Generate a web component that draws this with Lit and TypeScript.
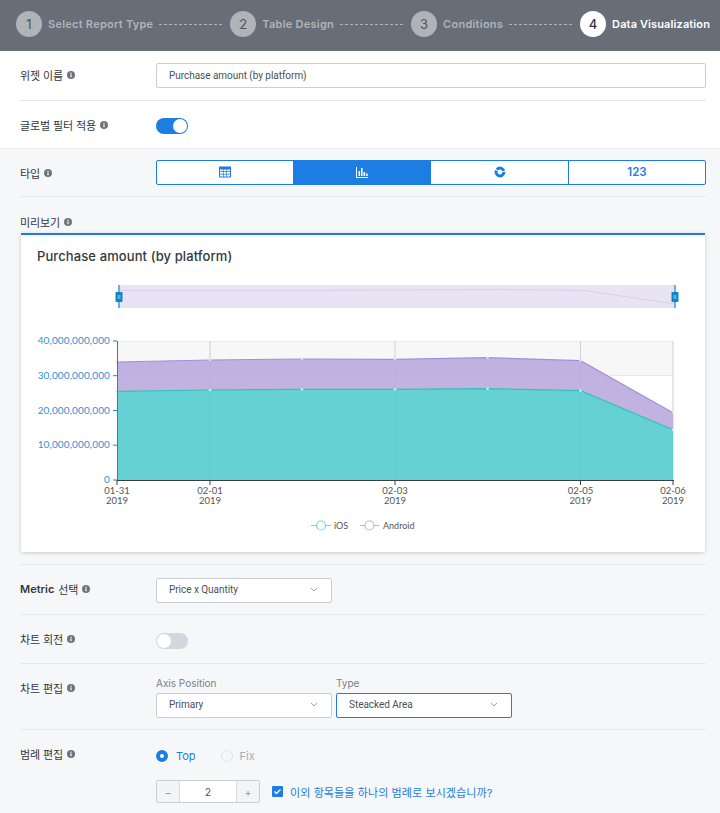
import { LitElement, html, css, svg } from "lit";
import { customElement } from "lit/decorators.js";

const XS = [117, 210, 302, 395, 487.6, 580.5, 673];
const ANDROID = [362, 360, 359, 359.3, 357.7, 360.7, 412.7];
const IOS = [391.3, 390, 389.3, 389.3, 388.7, 390.7, 429.7];
const pts = (ys: number[]) => ys.map((y, i) => `${XS[i]},${y}`).join(" ");
const back = (ys: number[]) => ys.map((y, i) => `${XS[i]},${y}`).reverse().join(" ");

const info = html`<svg class="info" viewBox="0 0 8 8"><circle cx="4" cy="4" r="4" fill="#6d747c"/><rect x="3.4" y="3.4" width="1.2" height="2.8" fill="#fff"/><rect x="3.4" y="1.7" width="1.2" height="1.1" fill="#fff"/></svg>`;
const chevron = html`<svg class="chev" viewBox="0 0 8 5"><path d="M1 1l3 3 3-3" fill="none" stroke="#9aa1a9" stroke-width="1"/></svg>`;

function chart() {
  const yl = [["40,000,000,000", 341], ["30,000,000,000", 375.7], ["20,000,000,000", 410.5], ["10,000,000,000", 445.2], ["0", 480]] as [string, number][];
  const xl = [["01-31", 117], ["02-01", 210], ["02-03", 395], ["02-05", 580.5], ["02-06", 673]] as [string, number][];
  return html`<svg class="chart" viewBox="21 270 684 270" width="684" height="270">
    ${svg`
    <rect x="118" y="285" width="557" height="23" fill="#e8e4f4"/>
    <polyline points="118,290.5 300,290.5 500,289.5 584,290.5 675,304" fill="none" stroke="#d8d2e6" stroke-width="1"/>
    <path d="M119 285V308M675 285V308" stroke="#62b2e2" stroke-width="2"/>
    <rect x="115.5" y="292" width="7" height="10" rx="1" fill="#0f86c8"/>
    <rect x="671.500" y="292" width="7" height="10" rx="1" fill="#0f86c8"/>
    <path d="M117.5 296h3M117.5 298h3M673.5 296h3M673.5 298h3" stroke="#cfe8f6" stroke-width=".8"/>
    <rect x="117" y="341" width="556" height="34.7" fill="#f7f7f7"/>
    <path d="M117 341.5H673M117 375.500H673" stroke="#ebebeb"/>
    ${XS.filter((_, i) => i !== 2 && i !== 4).slice(1).map((x) => svg`<path d="M${x} 341V480" stroke="#d0d0d0"/>`)}
    <polygon points="${pts(ANDROID)} ${back(IOS)}" fill="#b7a4dc" fill-opacity=".85"/>
    <polygon points="${pts(IOS)} 673,480 117,480" fill="#4fcacc" fill-opacity=".87"/>
    <polyline points="${pts(ANDROID)}" fill="none" stroke="#a48fda" stroke-width="1.2"/>
    <polyline points="${pts(IOS)}" fill="none" stroke="#2fc0c2" stroke-width="1.2"/>
    ${XS.map((x, i) => svg`<circle cx="${x}" cy="${ANDROID[i]}" r="1.3" fill="#e4dcf5"/><circle cx="${x}" cy="${IOS[i]}" r="1.3" fill="#c6f1f1"/>`)}
    <path d="M117.5 341V480" stroke="#1b87c9" stroke-width="1"/>
    <path d="M117 480.5H674" stroke="#3d3d3d" stroke-width="1"/>
    ${yl.map(([t, y]) => svg`<path d="M113 ${y}H117" stroke="#1b87c9"/><text class="yl" x="110" y="${y + 3}" text-anchor="end">${t}</text>`)}
    ${xl.map(([t, x]) => svg`<path d="M${x} 480V485" stroke="#3d3d3d"/><text class="xl" x="${x}" y="493.5" text-anchor="middle">${t}</text><text class="xl" x="${x}" y="503.5" text-anchor="middle">2019</text>`)}
    <path d="M311 525.5H331" stroke="#6adcdc"/><circle cx="321" cy="525.5" r="4.5" fill="#fff" stroke="#6adcdc" stroke-width="1.2"/>
    <text class="lg" x="334" y="528.5">iOS</text>
    <path d="M360 525.5H379" stroke="#c3b2e8"/><circle cx="369.5" cy="525.5" r="4.5" fill="#fff" stroke="#c3b2e8" stroke-width="1.2"/>
    <text class="lg" x="383" y="528.5">Android</text>
    `}
  </svg>`;
}

@customElement("app-root")
export class AppRoot extends LitElement {
  static styles = css`
    :host { display: block; width: 720px; height: 813px; overflow: hidden; background: #f6f7f9; color: #33383e;
      font-family: Inter, "Noto Sans CJK KR", sans-serif; font-size: 10px; }
    * { box-sizing: border-box; }
    .steps { height: 51px; background: #676e78; display: flex; align-items: center; padding: 0 10px 3px 16px; }
    .step { display: flex; align-items: center; gap: 6px; color: #b0b4ba; font-size: 11px; font-weight: 600; letter-spacing: .25px; white-space: nowrap; }
    .num { width: 26px; height: 26px; border-radius: 50%; background: #b0b3b8; color: #4f555d; font-size: 13px; font-weight: 400;
      display: flex; align-items: center; justify-content: center; letter-spacing: 0; }
    .step.on { color: #fff; letter-spacing: .12px; }
    .step.on .num { background: #fff; color: #33383e; font-weight: 500; }
    .dash { flex: 1; height: 1px; margin: 0 6px; background: repeating-linear-gradient(90deg, #aeb2b8 0 3px, transparent 3px 5px); }
    .white { background: #fff; border-bottom: 1px solid #ececee; }
    .row { margin: 0 14px 0 20px; display: flex; border-bottom: 1px solid #e4e6e9; }
    .row.last { border-bottom: 0; }
    .label { width: 136px; flex: none; display: flex; align-items: center; gap: 4px; font-size: 11px; letter-spacing: -0.1px; color: #33383e; height: 16px; white-space: nowrap; }
    .label b { font-weight: 600; letter-spacing: 0; }
    .info { width: 8px; height: 8px; flex: none; }
    .r1 { padding: 12px 0 12px; } .r1 .label { margin-top: 4px; }
    .r2 { padding: 17px 0 14px; }
    .r2 .label { margin-top: -1px; }
    .input, .select { background: #fff; border: 1px solid #c9ced6; border-radius: 2px; height: 25px; display: flex; align-items: center; padding: 0 12px; color: #4a5058; }
    .mini { font-family: Roboto, "Noto Sans CJK KR", sans-serif; font-size: 10px; letter-spacing: -.04px; }
    .input { flex: 1; }
    .select { width: 176px; justify-content: space-between; position: relative; padding: 0 13px 3px 12px; }
    .select.focus { border-color: #1c7de2; }
    .chev { width: 8px; height: 5px; }
    .toggle { width: 32px; height: 16px; border-radius: 8px; background: #1c7de2; display: flex; justify-content: flex-end; padding: 1px; }
    .toggle i { width: 14px; height: 14px; border-radius: 50%; background: #fff; }
    .toggle.off { background: #d2d6df; justify-content: flex-start; }
    .r3 { padding: 11px 0; } .r3 .label { margin-top: 5px; }
    .seg { flex: 1; display: grid; grid-template-columns: 136px 138px 137px 137px; height: 25px; border: 1px solid #1c7de2; border-radius: 2px; background: #fff; overflow: hidden; }
    .seg div { display: flex; align-items: center; justify-content: center; color: #1c7de2; font-weight: 600; font-size: 11.5px; padding-bottom: 2px; }
    .seg div.sep { border-left: 1px solid #1c7de2; }
    .seg div.on { background: #1c7de2; color: #fff; }
    .seg svg { width: 12px; height: 12px; }
    .preview { margin: 0 14px 0 20px; padding: 16.5px 0 12px; border-bottom: 1px solid #e4e6e9; }
    .preview .label { margin-bottom: 3.5px; }
    .card { margin: 0 1px; height: 319px; background: #fff; border-top: 2px solid #1c7de2; border-radius: 0 0 2px 2px; box-shadow: 0 1px 4px rgba(0,0,0,.18); }
    .card h3 { margin: 0; padding: 12px 0 0 16px; height: 35px; font-size: 13px; font-weight: 500; color: #33383e; letter-spacing: .1px; line-height: 18px; }
    .chart { display: block; }
    .yl { font: 10px Lato, sans-serif; fill: #2f93d3; letter-spacing: .12px; }
    .xl { font: 9.5px Lato, sans-serif; fill: #555; }
    .lg { font: 9px Lato, sans-serif; fill: #555; }
    .r4 { padding: 13px 0 11px; } .r4 .label { margin-top: 3px; }
    .r5 { padding: 18px 0 14px; } .r5 .label { margin-top: -2px; }
    .r6 { padding: 14px 0 11px; } .r6 .label { margin-top: 2px; }
    .pair { display: flex; gap: 4px; }
    .field span { display: block; color: #7a8088; height: 15px; line-height: 11px; }
    .r7 { padding: 15px 0 0; } .r7 .label { margin-top: 1px; }
    .legend { display: flex; flex-direction: column; gap: 16px; }
    .radios { display: flex; align-items: center; height: 19px; padding-top: 2px; font-size: 11px; color: #1c7de2; }
    .radio { width: 12px; height: 12px; border-radius: 50%; background: #fff; border: 4px solid #1c7de2; margin-right: 8px; }
    .radio.off { border: 1px solid #dfe2e7; background: #f6f7f9; margin-left: 25px; margin-right: 7px; }
    .radios .dim { color: #a6abb2; }
    .tail { display: flex; align-items: center; }
    .stepper { width: 104px; height: 23px; display: flex; border: 1px solid #c9ced6; border-radius: 2px; background: #fff; color: #4a5058; }
    .stepper div { display: flex; align-items: center; justify-content: center; flex: 1; }
    .stepper .b { flex: none; width: 23px; background: #f2f4f6; color: #8d939b; }
    .stepper .b:first-child { border-right: 1px solid #d7dbe0; }
    .stepper .b:last-child { border-left: 1px solid #d7dbe0; }
    .check { width: 11px; height: 11px; margin: 0 7px 0 12px; background: #1c7de2; border-radius: 1px; flex: none; }
    .check svg { display: block; width: 11px; height: 11px; }
    .q { color: #1c7de2; font-size: 11px; letter-spacing: .1px; white-space: nowrap; }
  `;

  render() {
    return html`
      <div class="steps">
        <div class="step"><span class="num">1</span>Select Report Type</div><div class="dash"></div>
        <div class="step"><span class="num">2</span>Table Design</div><div class="dash"></div>
        <div class="step"><span class="num">3</span>Conditions</div><div class="dash"></div>
        <div class="step on"><span class="num">4</span>Data Visualization</div>
      </div>
      <div class="white">
        <div class="row r1"><div class="label">위젯 이름 ${info}</div><div class="input mini">Purchase amount (by platform)</div></div>
        <div class="row r2 last"><div class="label">글로벌 필터 적용 ${info}</div><div class="toggle"><i></i></div></div>
      </div>
      <div class="row r3"><div class="label">타입 ${info}</div>
        <div class="seg">
          <div><svg viewBox="0 0 12 12"><path fill="currentColor" fill-rule="evenodd" d="M0 .5h12v11H0zM1 3.500v1.800h2.900V3.500zM4.600 3.500v1.800h2.800V3.500zM8.100 3.500v1.800H11V3.500zM1 6v1.800h2.900V6zM4.600 6v1.800h2.800V6zM8.100 6v1.800H11V6zM1 8.500v2h2.900v-2zM4.600 8.500v2h2.800v-2zM8.100 8.500v2H11v-2z"/></svg></div>
          <div class="on"><svg viewBox="0 0 12 12"><path fill="currentColor" d="M0 1h1v9.900h12v1.100H0zM2.500 5h1.600v5H2.500zM5 2h1.600v8H5zM7.500 6h1.600v4H7.500zM10 7.500h1.600V10H10z"/></svg></div>
          <div><svg viewBox="0 0 12 12"><circle cx="6" cy="6" r="3.900" fill="none" stroke="currentColor" stroke-width="3" stroke-dasharray="3.600 1 13.500 1 5.400 0" transform="rotate(-70 6 6)"/></svg></div>
          <div class="sep">123</div>
        </div>
      </div>
      <div class="preview">
        <div class="label">미리보기 ${info}</div>
        <div class="card"><h3>Purchase amount (by platform)</h3>${chart()}</div>
      </div>
      <div class="row r4"><div class="label"><b>Metric</b> 선택 ${info}</div><div class="select mini">Price x Quantity ${chevron}</div></div>
      <div class="row r5"><div class="label">차트 회전 ${info}</div><div class="toggle off"><i></i></div></div>
      <div class="row r6"><div class="label">차트 편집 ${info}</div>
        <div class="pair">
          <div class="field"><span>Axis Position</span><div class="select mini">Primary ${chevron}</div></div>
          <div class="field"><span>Type</span><div class="select focus mini">Steacked Area ${chevron}</div></div>
        </div>
      </div>
      <div class="row r7 last"><div class="label">범례 편집 ${info}</div>
        <div class="legend">
          <div class="radios"><i class="radio"></i>Top<i class="radio off"></i><span class="dim">Fix</span></div>
          <div class="tail">
            <div class="stepper"><div class="b">−</div><div>2</div><div class="b">+</div></div>
            <span class="check"><svg viewBox="0 0 11 11"><path d="M2.500 5.500l2 2 4-4" fill="none" stroke="#fff" stroke-width="1.400"/></svg></span>
            <span class="q">이외 항목들을 하나의 범례로 보시겠습니까?</span>
          </div>
        </div>
      </div>
    `;
  }
}
